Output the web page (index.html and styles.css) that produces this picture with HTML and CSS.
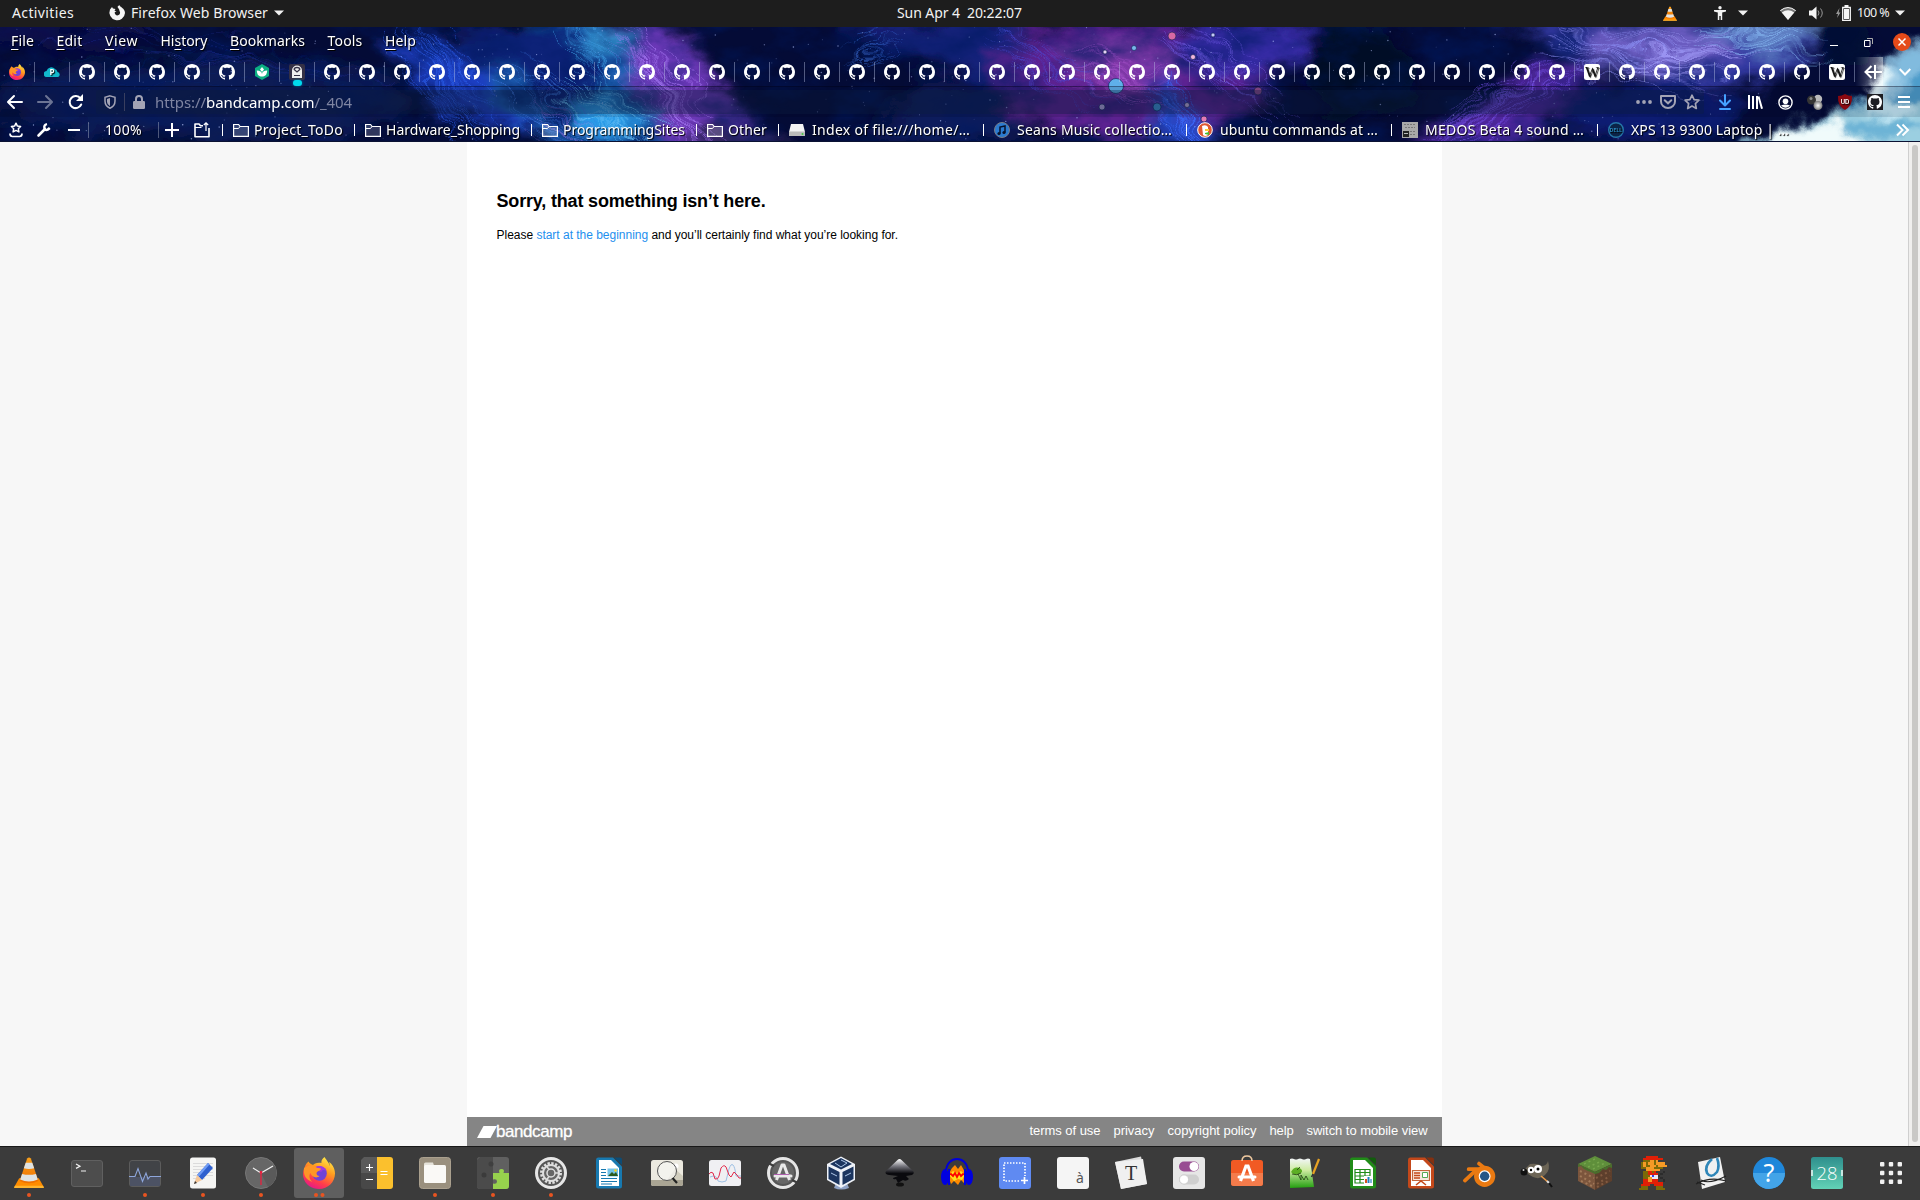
FILE: index.html
```html
<!DOCTYPE html>
<html lang="en">
<head>
<meta charset="utf-8">
<title>bandcamp</title>
<link rel="stylesheet" href="styles.css">
</head>
<body>
<svg class="defs" aria-hidden="true">
  <defs>
    <linearGradient id="ffBody" x1="0.8" y1="0" x2="0.3" y2="1"><stop offset="0" stop-color="#fff04a"/><stop offset=".4" stop-color="#ff9a1f"/><stop offset=".75" stop-color="#ff3c4b"/><stop offset="1" stop-color="#e5178c"/></linearGradient>
    <linearGradient id="orange" x1="0" y1="0" x2="0" y2="1"><stop offset="0" stop-color="#f9a01b"/><stop offset="1" stop-color="#ee6f00"/></linearGradient>
    <linearGradient id="teal" x1="0" y1="0" x2="0" y2="1"><stop offset="0" stop-color="#2f8f8d"/><stop offset="1" stop-color="#62d2b6"/></linearGradient>
    <linearGradient id="ink" x1="0" y1="0" x2="0" y2="1"><stop offset="0" stop-color="#fff"/><stop offset=".3" stop-color="#77777f"/><stop offset=".6" stop-color="#0a0a0e"/></linearGradient>
    <linearGradient id="npq" x1="0" y1="0" x2="0" y2="1"><stop offset="0" stop-color="#f3f6f8"/><stop offset=".4" stop-color="#cdeba0"/><stop offset="1" stop-color="#23a010"/></linearGradient>
    <radialGradient id="ball"><stop offset="0" stop-color="#fff"/><stop offset="1" stop-color="#777"/></radialGradient>
    <symbol id="github" viewBox="0 0 16 16"><path fill="currentColor" d="M8 0C3.58 0 0 3.58 0 8c0 3.54 2.29 6.53 5.47 7.59.4.07.55-.17.55-.38 0-.19-.01-.82-.01-1.49-2.01.37-2.53-.49-2.69-.94-.09-.23-.48-.94-.82-1.13-.28-.15-.68-.52-.01-.53.63-.01 1.08.58 1.23.82.72 1.21 1.87.87 2.33.66.07-.52.28-.87.51-1.07-1.78-.2-3.64-.89-3.64-3.95 0-.87.31-1.59.82-2.15-.08-.2-.36-1.02.08-2.12 0 0 .67-.21 2.2.82.64-.18 1.32-.27 2-.27s1.36.09 2 .27c1.53-1.04 2.2-.82 2.2-.82.44 1.1.16 1.92.08 2.12.51.56.82 1.27.82 2.15 0 3.07-1.87 3.75-3.65 3.95.29.25.54.73.54 1.48 0 1.07-.01 1.93-.01 2.2 0 .21.15.46.55.38A8.01 8.01 0 0 0 16 8c0-4.42-3.58-8-8-8z"/></symbol>
    <symbol id="firefox" viewBox="0 0 32 32"><path fill="url(#ffBody)" d="M21.500 0C19 2 18 4 18.500 6C14 5 11 7 10 8C8 7 6 6 5.500 4.500C2.500 7 2 9 1.500 11C0 14 -.2 18 .3 20C2 28 9 32 16 32C25 32 32 25 32 16.500C32 11 29 7 26 5C27 8 26.500 9 26.500 9C26 5 23 3 21.500 0z"/><circle cx="16.500" cy="16.500" r="7.300" fill="#7043d8"/><path fill="#a03be0" d="M10 12c4-5 12-3 13.500 2c-3-2-5-1-5 1z"/><path fill="#ff9626" d="M1 11c3-2 6-3 9-2c2 0 3 1 4 2c2 0 4 0 4 1c-1 2-4 2-4.500 4c0 2 1 3 3 3c-3 3-8 1-9-3c-2 2-1 7 2 9C3 23 0 18 1 11z"/></symbol>
    <symbol id="wiki" viewBox="0 0 16 16"><rect width="16" height="16" rx="2.500" fill="#fff"/><text x="8" y="13" text-anchor="middle" class="wiki-letter">W</text></symbol>
    <symbol id="paper" viewBox="0 0 16 16"><path fill="#12b8cc" d="M3 13a3 3 0 0 1-.5-6A5 5 0 0 1 11 5a4 4 0 0 1 2.500 3A2.600 2.600 0 0 1 14 13z"/><text x="8" y="11.200" text-anchor="middle" class="p-letter">P</text></symbol>
    <symbol id="plant" viewBox="0 0 16 16"><path fill="#0caf83" d="M8 0l7 4v8l-7 4l-7-4V4z"/><path fill="#fff" d="M8 3l2 2.500L8 8L6 5.500zM2.800 6.500C6 6.500 8 8 8 10C8 8 10 6.500 13.200 6.500C13 11 11 12.500 8 12.500S3 11 2.800 6.500z"/></symbol>
    <symbol id="proton" viewBox="0 0 16 16"><rect width="16" height="16" rx="2" fill="#343045"/><path fill="#eee" d="M3 14V6.500a5 5 0 0 1 10 0V14z"/><path fill="none" stroke="#343045" stroke-width="1.300" d="M5.200 5.500a2.800 2 0 0 1 5.600 0L8 8z"/><path stroke="#343045" fill="none" d="M5 11.500h6"/></symbol>
    <symbol id="cone" viewBox="0 0 32 34"><path fill="#ff8c00" d="M5.500 23h21l5.500 10H0z"/><path fill="#ffb52e" d="M1 31h30l1 2.500H0z"/><path fill="url(#orange)" d="M14 2q2-2 4 0l8 24q-10 5-20 0z"/><path fill="#dfe3e4" d="M12.500 6.500h7l2 6q-5.500 1.500-11 0zM8.600 18.500q7.400 2 14.800 0l2 6q-9.400 4-18.800 0z"/></symbol>
    <symbol id="folder" viewBox="0 0 16 16"><path fill="rgba(255,255,255,.18)" stroke="#fff" stroke-width="1.200" d="M.6 13V2.500h5l1.500 2h8.300V14.400H.6z"/><path fill="none" stroke="#fff" d="M1 6.500h4.500l1.500-2"/></symbol>
    <symbol id="caret" viewBox="0 0 10 6"><path fill="currentColor" d="M0 .5h10L5 5.500z"/></symbol>
  </defs>
</svg>

<header class="topbar">
  <span class="activities" data-w="62">Activities</span>
  <svg class="app-icon" viewBox="0 0 16 16"><path fill="#f5f5f5" d="M3 2l1 1.500L6.500 4L5.500 5.500L7.500 7H5.800A2.700 2.700 0 1 0 10.500 6C10.500 4 9 3 8.500 2C9 1 10 .5 10.500 0c0 2 5.500 3 5.500 8A7.800 7.800 0 1 1 1 4.500z"/></svg>
  <span class="app-name" data-w="137">Firefox Web Browser</span>
  <svg class="caret"><use href="#caret"/></svg>
  <span class="clock" data-w="125">Sun Apr 4&ensp;20:22:07</span>
  <div class="tray">
    <svg class="t-cone"><use href="#cone"/></svg>
    <svg class="t-a11y" viewBox="0 0 12 14"><circle cx="6" cy="1.700" r="1.700" fill="#f2f2f2"/><path fill="#f2f2f2" d="M0 4h12v1.500L8.200 6.500V14H6.700V10H5.300v4H3.800V6.500L0 5.500z"/></svg>
    <svg class="caret t-c1"><use href="#caret"/></svg>
    <svg class="t-wifi" viewBox="0 0 16 13"><path fill="#777" d="M0 3.500Q8-3 16 3.500L8 13z"/><path fill="#f5f5f5" d="M1.800 5.500Q8 1 14.200 5.500L8 13z"/><path fill="none" stroke="#f5f5f5" d="M.3 3.700Q8-2.600 15.700 3.700"/></svg>
    <svg class="t-vol" viewBox="0 0 15 14"><path fill="#f5f5f5" d="M0 4.500h3L7.500.5v13L3 9.500H0z"/><path fill="none" stroke="#999" d="M9 4.500q2 2.500 0 5M11.500 2.500q3.500 4.500 0 9"/></svg>
    <svg class="t-bat" viewBox="0 0 15 16"><path fill="#999" d="M3.500 3L0 9h2L1 13l3.500-5.500H2.700z"/><path fill="none" stroke="#f5f5f5" stroke-width="1.300" d="M6.700 2.500h7.600v12.800H6.700z"/><path fill="#f5f5f5" d="M8.500 0h4v2.500h-4zM8 4h5v10H8z"/></svg>
    <span class="t-pct" data-w="32">100 %</span>
    <svg class="caret t-c2"><use href="#caret"/></svg>
  </div>
</header>

<section class="chrome">
  <svg class="nebula" viewBox="0 27 1920 115" preserveAspectRatio="none">
    <defs>
      <filter id="cloud" x="-30%" y="-60%" width="160%" height="220%"><feGaussianBlur stdDeviation="8" result="b"/><feTurbulence type="fractalNoise" baseFrequency=".02 .035" numOctaves="5" seed="8"/><feDisplacementMap in="b" scale="44" xChannelSelector="R" yChannelSelector="G"/></filter>
      <filter id="puff" x="-20%" y="-40%" width="140%" height="180%"><feGaussianBlur stdDeviation="3" result="b"/><feTurbulence type="fractalNoise" baseFrequency=".035" numOctaves="4" seed="5"/><feDisplacementMap in="b" scale="28" xChannelSelector="R" yChannelSelector="G"/></filter>
      <filter id="wisp" x="-10%" y="-30%" width="120%" height="160%"><feTurbulence type="fractalNoise" baseFrequency=".025 .04" numOctaves="2" seed="3" result="n"/><feDisplacementMap in="SourceGraphic" in2="n" scale="34" xChannelSelector="R" yChannelSelector="G"/><feGaussianBlur stdDeviation=".5"/></filter>
      <filter id="dust" x="0" y="0" width="100%" height="100%"><feTurbulence type="fractalNoise" baseFrequency=".018 .03" numOctaves="6" seed="21"/><feColorMatrix values="0 0 0 0 0  0 0 0 0 .01  0 0 0 0 .12  2.600 0 0 0 -1.100"/></filter>
    </defs>
    <rect y="27" width="1920" height="115" fill="#040b36"/>
    <g filter="url(#cloud)">
      <ellipse cx="200" cy="100" rx="210" ry="40" fill="#0a1d55"/>
      <ellipse cx="60" cy="35" rx="90" ry="14" fill="#0b0a4c"/>
      <path d="M380 35L470 50L540 130L450 120z" fill="#1a3dc0"/>
      <path d="M530 20L640 15L630 60L700 150H560L480 80z" fill="#1b62b4"/>
      <path d="M450 27h110l60 70l-40 45z" fill="#0f2078"/>
      <path d="M600 15h70l60 82l50 60h-100z" fill="#6c38b8"/>
      <ellipse cx="612" cy="118" rx="34" ry="22" fill="#2a9ce8"/>
      <ellipse cx="610" cy="38" rx="28" ry="18" fill="#2f86c4"/>
      <path d="M820 17h190l60 40l-80 30z" fill="#14247c"/>
      <path d="M860 142h180l-30-50l-80-10z" fill="#0b1c5c"/>
      <ellipse cx="740" cy="142" rx="50" ry="14" fill="#30265e"/>
      <ellipse cx="1130" cy="78" rx="140" ry="62" fill="#5c2490"/>
      <ellipse cx="1120" cy="62" rx="60" ry="24" fill="#8038a8"/>
      <path d="M1150 70L1230 152H1160z" fill="#2746c4"/>
      <ellipse cx="1250" cy="46" rx="80" ry="26" fill="#342ca4"/>
      <ellipse cx="1360" cy="70" rx="55" ry="50" fill="#020b25"/>
      <path d="M1400 155L1570 50L1600 75L1500 155z" fill="#50289e"/>
      <path d="M1480 15h290l50 42l-120 40z" fill="#3238a0"/>
      <ellipse cx="1655" cy="46" rx="80" ry="26" fill="#6a5cc0"/>
      <ellipse cx="1770" cy="30" rx="60" ry="18" fill="#5f80c4"/>
      <ellipse cx="1650" cy="112" rx="90" ry="30" fill="#101e72"/>
      <ellipse cx="1840" cy="40" rx="32" ry="26" fill="#051036"/>
    </g>
    <rect y="27" width="1740" height="115" filter="url(#dust)" opacity=".6"/>
    <g class="strands" id="strands" fill="none" filter="url(#wisp)"></g>
    <g filter="url(#puff)">
      <path d="M1780 150L1800 128L1830 122L1850 105L1880 98L1895 60L1940 34V150z" fill="#4e9dcb"/>
      <path d="M1700 160L1740 140L1775 136L1800 118L1850 114L1880 96L1945 105V160z" fill="#9bcfe1"/>
      <path d="M1758 150L1800 122L1838 124L1870 150z" fill="#f0fbfb"/>
      <ellipse cx="1880" cy="128" rx="34" ry="9" fill="#6db4d6"/>
      <ellipse cx="1892" cy="108" rx="26" ry="8" fill="#c4e8f6"/>
      <ellipse cx="1884" cy="84" rx="14" ry="16" fill="#e4f6fb"/>
      <path d="M1880 60L1925 35V70L1890 100z" fill="#8fc3e2" opacity=".8"/>
    </g>
    <g id="stars"></g>
    <g stroke="#0c1c50" stroke-opacity=".6"><circle cx="1116" cy="86" r="7.500" fill="#5fb0ea"/><circle cx="1157" cy="107" r="4" fill="#3f93d2"/><circle cx="1172" cy="36" r="4" fill="#d968a4"/><circle cx="1102" cy="107" r="3" fill="#b8a8dc"/><circle cx="1187" cy="105" r="2.500" fill="#c8b0da"/><circle cx="1204" cy="119" r="3" fill="#e47bb4"/><circle cx="1258" cy="91" r="4" fill="#8d4a8c"/><circle cx="1193" cy="57" r="2.500" fill="#f0b8dc"/><circle cx="1105" cy="52" r="2" fill="#e8d4f4"/><circle cx="1134" cy="48" r="2.500" fill="#79b7ea"/><circle cx="1213" cy="35" r="2" fill="#c4c8f8"/></g>
  </svg>

  <nav class="menubar">
    <span data-w="23"><u>F</u>ile</span><span data-w="26"><u>E</u>dit</span><span data-w="33"><u>V</u>iew</span><span data-w="47">Hi<u>s</u>tory</span><span data-w="75"><u>B</u>ookmarks</span><span data-w="35"><u>T</u>ools</span><span data-w="31"><u>H</u>elp</span>
    <div class="winctl">
      <svg width="8" height="16" viewBox="0 0 8 16"><path stroke="#fff" d="M0 11.500h8"/></svg>
      <svg width="9" height="9" viewBox="0 0 9 9"><path fill="none" stroke="#fff" d="M.5 2.500h5.500v6H.5z"/><path fill="none" stroke="#aaa" d="M3 .5h5.500V6"/></svg>
      <svg width="18" height="18" viewBox="0 0 18 18"><circle cx="9" cy="9" r="9" fill="#e54a19"/><path stroke="#fff" stroke-width="1.500" d="M5.500 5.500l7 7M12.500 5.500l-7 7"/></svg>
    </div>
  </nav>

  <div class="tabs"><div class="tabstrip" id="tabstrip"></div>
    <div class="tabend"><svg width="18" height="16" viewBox="0 0 18 16"><path fill="none" stroke="#fff" stroke-width="2" d="M1 8h17M7.500 2L1.500 8l6 6M11 1v14"/></svg></div>
    <svg class="alltabs" width="12" height="8" viewBox="0 0 12 8"><path fill="none" stroke="#fff" stroke-width="2" d="M.7 1L6 6.500L11.300 1"/></svg>
  </div>

  <div class="navbar">
    <svg class="n-back" viewBox="0 0 16 14"><path fill="none" stroke="#fff" stroke-width="2" stroke-linecap="round" stroke-linejoin="round" d="M15 7H1.500M7 1L1 7l6 6"/></svg>
    <svg class="n-fwd" viewBox="0 0 16 14"><path fill="none" stroke="#fff" stroke-opacity=".4" stroke-width="2" stroke-linecap="round" stroke-linejoin="round" d="M1 7h13.500M9 1l6 6l-6 6"/></svg>
    <svg class="n-reload" viewBox="0 0 16 16"><path fill="none" stroke="#fff" stroke-width="2" stroke-linecap="round" d="M13.200 10.500A6 6 0 1 1 12.500 4.500"/><path fill="#fff" d="M15 0v7H8z"/></svg>
    <div class="urlbar">
      <svg class="n-shield" viewBox="0 0 12 14"><path fill="none" stroke="#a3a4b5" stroke-width="1.500" d="M6 .9l5 1.500V6q0 5-5 7.200Q1 11 1 6V2.400z"/><path fill="#a3a4b5" d="M6 3l-3 1v3q0 2.500 3 4.200z"/></svg>
      <i class="n-sep"></i>
      <svg class="n-lock" viewBox="0 0 12 14"><path fill="none" stroke="#a3a4b5" stroke-width="2" d="M3 7V4a3 3 0 0 1 6 0v3"/><rect y="6" width="12" height="8" rx="1.200" fill="#a3a4b5"/></svg>
      <span class="url" data-w="197">https://<b>bandcamp.com</b>/_404</span>
      <svg class="n-dots" viewBox="0 0 16 4"><g fill="#a3a4b5"><circle cx="2" cy="2" r="1.900"/><circle cx="8" cy="2" r="1.900"/><circle cx="14" cy="2" r="1.900"/></g></svg>
      <svg class="n-pocket" viewBox="0 0 16 14"><path fill="none" stroke="#a3a4b5" stroke-width="2" stroke-linejoin="round" d="M1 1h14v5.500a7 6.500 0 0 1-14 0z"/><path fill="none" stroke="#a3a4b5" stroke-width="2" stroke-linecap="round" d="M4.700 5.200L8 8.300l3.300-3.100"/></svg>
      <svg class="n-star" viewBox="0 0 16 16"><path fill="none" stroke="#a3a4b5" stroke-width="1.700" stroke-linejoin="round" d="M8 1.200l2.100 4.400l4.800.6l-3.500 3.400l.9 4.900L8 12.100l-4.300 2.400l.9-4.900L1.100 6.200l4.800-.6z"/></svg>
    </div>
    <svg class="n-down" viewBox="0 0 12 16"><path fill="none" stroke="#45a1ff" stroke-width="2" stroke-linecap="round" stroke-linejoin="round" d="M6 1v10M1 6.500l5 5l5-5M1 15h10"/></svg>
    <svg class="n-lib" viewBox="0 0 15 14"><path fill="none" stroke="#fff" stroke-width="2" d="M1 0v14M5 1v13M9 1v13M10.500 1.500L14 13.700"/></svg>
    <svg class="n-acct" viewBox="0 0 15 15"><circle cx="7.500" cy="7.500" r="6.600" fill="none" stroke="#fff" stroke-width="1.400"/><circle cx="7.500" cy="6.200" r="2.800" fill="#fff"/><path fill="#fff" d="M3 10.500q4.500-2 9 0q-4.500 4.500-9 0z"/></svg>
    <svg class="n-balls" viewBox="0 0 16 16"><circle cx="11" cy="5" r="4.200" fill="#bbb"/><circle cx="4.500" cy="6" r="4.500" fill="#343434"/><circle cx="4" cy="4.500" r="1.500" fill="#888"/><circle cx="11" cy="11.500" r="4.500" fill="url(#ball)"/></svg>
    <svg class="n-ubo" viewBox="0 0 14 16"><path fill="#8a0810" d="M7 0q3 2 7 2q.5 10-7 14Q-.5 12 0 2q4 0 7-2z"/><text x="7" y="9.500" text-anchor="middle" class="ubo-text">UD</text></svg>
    <div class="n-gh"><svg width="14" height="14"><use href="#github"/></svg></div>
    <svg class="n-menu" viewBox="0 0 12 12"><path stroke="#fff" stroke-width="2" d="M0 1h12M0 6h12M0 11h12"/></svg>
  </div>

  <div class="bookmarks">
    <svg class="b-tray" viewBox="0 0 14 16"><path fill="none" stroke="#fff" stroke-width="1.500" stroke-linejoin="round" d="M7 1.200l1.400 2.900l3.200.4L9.300 6.700l.6 3.200L7 8.400L4.100 9.900l.6-3.200L2.400 4.500l3.200-.4z"/><path fill="none" stroke="#fff" stroke-width="1.700" d="M1 11.500q0 3 2.500 3h7q2.500 0 2.500-3"/></svg>
    <svg class="b-wrench" viewBox="0 0 14 14"><path stroke="#fff" stroke-width="2.600" stroke-linecap="round" d="M1.500 12.500L8 6"/><path fill="none" stroke="#fff" stroke-width="2.400" d="M10 1.200Q6.500 2 7.500 5.500T12.800 5"/></svg>
    <svg class="b-minus" viewBox="0 0 12 2"><path stroke="#fff" stroke-width="2" d="M0 1h12"/></svg>
    <i class="b-sep s1"></i>
    <span class="b-zoom" data-w="37">100%</span>
    <i class="b-sep s2"></i>
    <svg class="b-plus" viewBox="0 0 14 14"><path stroke="#fff" stroke-width="2" d="M0 7h14M7 0v14"/></svg>
    <svg class="b-open" viewBox="0 0 16 16"><path fill="none" stroke="#fff" stroke-width="1.600" stroke-linejoin="round" d="M9 3.800H6.500L5 2H1v12.800h14V6"/><path fill="none" stroke="#fff" stroke-width="1.200" d="M12 9V1M9.800 3L12 .8L14.200 3M1 5.500h6.500"/></svg>
    <i class="bar"></i><svg class="bm"><use href="#folder"/></svg><span data-w="89">Project_ToDo</span>
    <i class="bar"></i><svg class="bm"><use href="#folder"/></svg><span data-w="134">Hardware_Shopping</span>
    <i class="bar"></i><svg class="bm"><use href="#folder"/></svg><span data-w="122">ProgrammingSites</span>
    <i class="bar"></i><svg class="bm"><use href="#folder"/></svg><span data-w="39">Other</span>
    <i class="bar"></i><svg class="bm wide" viewBox="0 0 16 16"><path fill="#f4f4f4" d="M2 2h12l2 8H0z"/><path fill="#bbb" d="M0 9.500h16V14H0z"/><circle cx="13.500" cy="12" r="1" fill="#4c4"/></svg><span data-w="158">Index of file:///home/…</span>
    <i class="bar mid"></i><svg class="bm wide" viewBox="0 0 16 16"><circle cx="8" cy="8" r="7.500" fill="#2b7ad0" stroke="#777c88"/><path fill="none" stroke="#06122c" stroke-width="1.500" d="M6 11.500V5l5-1v6.500"/><circle cx="5" cy="11.500" r="1.600" fill="#06122c"/><circle cx="10" cy="10.500" r="1.600" fill="#06122c"/></svg><span data-w="155">Seans Music collectio…</span>
    <i class="bar far"></i><svg class="bm wide" viewBox="0 0 16 16"><circle cx="8" cy="8" r="7.300" fill="#de5833" stroke="#fff"/><path fill="#fff" d="M5 4q4-2 6 1v8q-3 2-5 0z"/><path fill="#fc3" d="M8 7h4v2H8z"/><path fill="#4b3" d="M8 11l4-1v3l-4-1z"/></svg><span data-w="158">ubuntu commands at …</span>
    <i class="bar mid"></i><svg class="bm" viewBox="0 0 16 16"><path fill="#a9a9a9" d="M0 0h16v16H0z"/><path stroke="#777" stroke-dasharray="2 1" d="M2 2.500h12M3 5.500h10M8 9.500h6M8 12.500h6"/><path fill="#222" d="M1 9h6v6H1z"/><path stroke="#bbb" d="M2 11.500h4"/></svg><span class="after-note" data-w="159">MEDOS Beta 4 sound …</span>
    <i class="bar mid"></i><svg class="bm wide" viewBox="0 0 16 16"><circle cx="8" cy="8" r="7.300" fill="#0b2447" stroke="#2577a8" stroke-width="1.400"/><text x="8" y="10" text-anchor="middle" class="dell-text">DELL</text></svg><span data-w="158">XPS 13 9300 Laptop | …</span>
    <svg class="b-more" viewBox="0 0 13 12"><path fill="none" stroke="#fff" stroke-width="2" d="M1 .5L6.500 6L1 11.500M6.500 .5L12 6l-5.500 5.500"/></svg>
  </div>
</section>

<main class="viewport">
  <article class="page">
    <section class="message">
      <h1><span data-w="269">Sorry, that something isn’t here.</span></h1>
      <p><span data-w="401.500">Please <a>start at the beginning</a> and you’ll certainly find what you’re looking for.</span></p>
    </section>
    <footer class="foot">
      <svg class="bc-mark" viewBox="0 0 20 12"><path fill="#fff" d="M6.500 0H20L13.500 12H0z"/></svg>
      <span class="bc-name" data-w="76">bandcamp</span>
      <div class="foot-links"><span data-w="71">terms of use</span><span data-w="41">privacy</span><span data-w="89">copyright policy</span><span data-w="24">help</span><span data-w="121">switch to mobile view</span></div>
    </footer>
  </article>
  <div class="scrollbar"><i></i></div>
</main>

<footer class="dock">
  <div class="app run"><svg viewBox="0 0 32 32"><use href="#cone" x="1" y="-1" width="30" height="33"/></svg></div>
  <div class="app"><svg viewBox="0 0 32 32"><rect x=".5" y="3.500" width="31" height="26" rx="2.500" fill="#4d4d4d" stroke="#606060"/><path fill="none" stroke="#f2f2f2" stroke-width="1.200" d="M5 7l4 2.200l-4 2.200M10 14h5"/></svg></div>
  <div class="app run"><svg viewBox="0 0 32 32"><rect x=".5" y="3.500" width="31" height="26" rx="2.500" fill="#414347" stroke="#5c5c5c"/><path fill="#4c5264" d="M1 20h30v9H1z"/><path fill="none" stroke="#8ea6dc" stroke-width="1.100" d="M0 19.500h6l3-8l4.500 13L17 16l2 6l2-2.500h11"/></svg></div>
  <div class="app run"><svg viewBox="0 0 32 32"><rect x="3" y=".5" width="26" height="31" rx="2.500" fill="#f5f5f3"/><path stroke="#d4d4d4" stroke-width=".8" d="M6 6.500h20M6 9.500h20M6 12.500h20M6 15.500h20M6 18.500h20M6 21.500h12"/><path fill="#2e60cf" d="M10 18L21 6l5 5l-11 12z"/><path fill="#6f9cf5" d="M10 18L21 6l1.500 1.500L12 19.500z"/><path fill="#f4c79a" d="M10 18l5 5l-8 4z"/><path fill="#333" d="M8 24l2 2l-3 1z"/></svg></div>
  <div class="app run"><svg viewBox="0 0 32 32"><circle cx="16" cy="16" r="15.500" fill="#666" stroke="#777"/><path fill="#5a5a5a" d="M16 16l14-7a16 16 0 0 1-7 21z"/><path fill="none" stroke="#f2f2f2" stroke-width="1.200" d="M8 11l8 5l12-7"/><path stroke="#e8203e" stroke-width="1.300" d="M16 14v14"/><circle cx="16" cy="15.500" r="1.400" fill="#e8203e"/></svg></div>
  <div class="app run two active"><svg viewBox="0 0 32 32"><use href="#firefox" width="32" height="32"/></svg></div>
  <div class="app"><svg viewBox="0 0 32 32"><path fill="#5a5a5a" d="M3 0h13v16H0V3z"/><path fill="#484848" d="M0 16h16v16H3q-3 0-3-3z"/><path fill="#fbc02d" d="M16 0h13q3 0 3 3v26q0 3-3 3H16z"/><path stroke="#fff" stroke-width="1.100" d="M5 10.500h7M8.500 7v7M5 22.500h7M19.500 14.500h7M19.500 17.500h7"/></svg></div>
  <div class="app run"><svg viewBox="0 0 32 32"><rect x=".5" y=".5" width="31" height="31" rx="3" fill="#9a907e" stroke="#aaa08e"/><path fill="#e6e3da" d="M5 7q0-1.500 1.500-1.500H14l1 3h10V12H5z"/><rect x="5" y="8" width="22" height="18" rx="1.500" fill="#faf9f6"/></svg></div>
  <div class="app run"><svg viewBox="0 0 32 32"><rect width="32" height="32" rx="3" fill="#606060"/><path fill="#4b4b4b" d="M3 0h13v32H3q-3 0-3-3V3z"/><path fill="#97d24d" d="M16 16h6.500q-1.500-4 2-4t2 4H32v13q0 3-3 3H16v-5.500q4 1 4-2t-4-2z"/><circle cx="7" cy="18" r="2.500" fill="#3b3b3b"/><circle cx="14" cy="7" r="2.500" fill="#3f3f3f"/></svg></div>
  <div class="app run"><svg viewBox="0 0 32 32"><circle cx="16" cy="16" r="14.500" fill="#555" stroke="#e6e6e6" stroke-width="3"/><circle cx="16" cy="16" r="9.500" fill="none" stroke="#dedede" stroke-width="3" stroke-dasharray="2.300 1.430"/><circle cx="16" cy="16" r="8" fill="#666" stroke="#dedede" stroke-width="2"/><circle cx="16" cy="16" r="4" fill="none" stroke="#dedede" stroke-width="1.500"/><path stroke="#dedede" stroke-width="1.500" d="M20 16h4M14 12.500L11.500 9M14 19.500L11.500 23"/></svg></div>
  <div class="app"><svg viewBox="0 0 32 32"><path fill="#1779b0" d="M5 .5h15l9 9V29q0 2.500-2.500 2.500h-21Q3 31.500 3 29V3Q3 .5 5 .5z"/><path fill="#0d4c75" d="M21 .5h6q2 0 2 2V8z"/><path fill="#fff" d="M6 3h12l8 8v18H6z"/><path stroke="#1779b0" stroke-width="1.200" d="M8 12.500h5M8 15.500h5M8 18.500h5M8 21.500h16M8 24.500h16M8 27h11"/><path fill="#74c3e8" d="M14.500 11.500H25v8H14.500z"/><path fill="#2b5a1d" d="M15 19l4-4l2 2l2-2l2 4z"/><circle cx="22.500" cy="13.500" r="1.300" fill="#f8d21c"/></svg></div>
  <div class="app"><svg viewBox="0 0 32 32"><rect y="3" width="32" height="26" rx="2.500" fill="#eceae0"/><path fill="#aaa594" d="M0 23h32v4q0 2-2 2H2q-2 0-2-2z"/><path fill="#d1cebe" d="M16 23l8-11l8 7v4z"/><circle cx="25" cy="9" r="2.500" fill="#fff"/><circle cx="16" cy="14" r="9.500" fill="#f6f6f2" fill-opacity=".75" stroke="#555"/><path stroke="#222" stroke-width="2.200" d="M21.500 21l4.500 5"/></svg></div>
  <div class="app"><svg viewBox="0 0 32 32"><rect y="3" width="32" height="26" rx="2.500" fill="#f0f0f3"/><path fill="none" stroke="#9ec0e4" d="M1 20q4-2 6 0t2 4q4 2 8 0l3-12q2-6 4-4t3 11h5"/><path fill="none" stroke="#e22a4b" d="M0 17q2-3 4-1l2 6q3 1 4-3l2-8q3-4 5-1l3 8l2 2l3-5l3 3l2 3h2"/></svg></div>
  <div class="app"><svg viewBox="0 0 32 32"><circle cx="16" cy="16" r="14.500" fill="#555" stroke="#e6e6e6" stroke-width="3"/><path stroke="#3b3b3b" stroke-width="2" d="M1 6l6 3M31 26l-6-3"/><circle cx="16" cy="16" r="11" fill="#666"/><path fill="none" stroke="#e9e9e9" stroke-width="3" stroke-linejoin="round" d="M9.500 23L15 8h2l5.500 15"/><path stroke="#e9e9e9" stroke-width="3" stroke-linecap="round" d="M8 19h16"/><path stroke="#b060b0" d="M7 17.500h15"/></svg></div>
  <div class="app"><svg viewBox="0 0 32 32"><path fill="#8fa3c6" d="M11 26h11l2 5q-8 3-15 0z"/><path fill="#eef2f8" d="M16-.5L30 7v16L16 31L2 23V7z"/><path fill="#1b355f" d="M16 1l11 6l-11 5.500L5 7zM3.500 9.500l11 5.500v13l-11-6zM28.500 9.500l-11 5.500v13l11-6z"/><path fill="none" stroke="#aec7e8" d="M6 16l6 3M20 19l6-3M10 6l6 4l6-4l-6-3"/></svg></div>
  <div class="app"><svg viewBox="0 0 32 32"><path fill="url(#ink)" d="M14.500 3q2-2 4 0L30 14q2 2-1 4l-6 1l3 3q-3 3-6 1l-5 3l-2-4q-3 1-3-1l5-2l-9-1q-5-1-3-4z"/><ellipse cx="17" cy="27.500" rx="4" ry="2" fill="#111"/></svg></div>
  <div class="app"><svg viewBox="0 0 32 32"><path fill="#ff8a00" d="M7 18l4-7l3-3l3 4l3-4l4 7l2 4l-3 7l-3-3l-3 5l-4-4l-3 3z"/><path fill="#ffdf1c" d="M8 18l4-4l4 2l4-2l4 4l-3 5l-4-1l-4 2z"/><path stroke="#f00" stroke-width="1.800" fill="none" d="M7 18l3-1l2 2l2-3l2 4l2-4l2 3l2-2l3 1"/><path fill="none" stroke="#0000d8" stroke-width="2" d="M5 14C6-2 26-2 27 14"/><ellipse cx="4" cy="20" rx="4" ry="8" fill="#0000e0"/><ellipse cx="28" cy="20" rx="4" ry="8" fill="#0000e0"/><path stroke="#0000e0" stroke-width="2" d="M8 12v16M24 12v16"/></svg></div>
  <div class="app"><svg viewBox="0 0 32 32"><rect width="32" height="32" rx="3" fill="#5f8af2"/><path fill="none" stroke="#fff" stroke-width="1.700" stroke-dasharray="1.500 1.500" d="M5 6h21v18H5z"/><path stroke="#5f8af2" stroke-width="5" d="M21 24h8M25.500 19v9"/><path stroke="#fff" stroke-width="1.700" d="M22 23.500h7M25.500 20v7"/></svg></div>
  <div class="app"><svg viewBox="0 0 32 32"><rect width="32" height="32" rx="3" fill="#f5f5f5"/><text x="23" y="26" text-anchor="middle" class="char-text">à</text></svg></div>
  <div class="app"><svg viewBox="0 0 32 32"><path fill="#dadada" d="M0 5L26-.5L32 27L6 32z"/><path fill="#f0f0f0" d="M0 5L28 2L32 27L6 32z"/><text x="16" y="23" text-anchor="middle" class="font-text">T</text></svg></div>
  <div class="app"><svg viewBox="0 0 32 32"><rect width="32" height="32" rx="3" fill="#e6e6e6"/><rect x="6" y="4.500" width="20" height="10" rx="5" fill="#984d92"/><circle cx="21" cy="9.500" r="4.500" fill="#fff"/><rect x="6" y="17.500" width="20" height="10" rx="5" fill="#cfcfcf"/><circle cx="11" cy="22.500" r="4.500" fill="#fff" stroke="#bbb" stroke-width=".5"/></svg></div>
  <div class="app"><svg viewBox="0 0 32 32"><rect y="3" width="32" height="26" rx="2.500" fill="#f15a24"/><path fill="#f47b4b" d="M0 16h32v10q0 3-3 3H3q-3 0-3-3z"/><path fill="none" stroke="#efc9a0" stroke-width="1.500" d="M11 4q0-5 5-5t5 5"/><path fill="none" stroke="#fff" stroke-width="3.200" d="M9.500 24L15 9h2l5.500 15"/><path stroke="#fff" stroke-width="3" stroke-linecap="round" d="M8 20h16"/></svg></div>
  <div class="app"><svg viewBox="0 0 32 32"><path fill="url(#npq)" d="M1 2q2-1 4 0t4 0t4 0t4 0t4 0l4 28l-24 1z"/><path fill="#5cae24" d="M2 15q4-7 10-3q3 3-2 5t-8-2z"/><path fill="none" stroke="#203a10" stroke-width=".8" d="M3 17q5 2 9-1M8 13l3-3M9 17l3 6v-5l3 5l2-4l2 4"/><path stroke="#e8a323" stroke-width="2.200" d="M30 2L24 17"/><path stroke="#333" stroke-width="1.500" d="M24 17l-1.500 3"/></svg></div>
  <div class="app"><svg viewBox="0 0 32 32"><path fill="#218c18" d="M5 .5h15l9 9V29q0 2.500-2.500 2.500h-21Q3 31.500 3 29V3Q3 .5 5 .5z"/><path fill="#115c0c" d="M21 .5h6q2 0 2 2V8z"/><path fill="#fff" d="M6 3h12l8 8v18H6z"/><path fill="none" stroke="#218c18" stroke-width="1.200" d="M8 12.500h15V26H8zM8 15.500h15M8 19h15M8 22.500h15M13 12.500V26M18 12.500V26"/><path fill="#fff" d="M17 19h9v8h-9z"/><path fill="#d9531e" d="M18 22h2v4h-2z"/><path fill="#1e7ec2" d="M20.500 20h2v6h-2z"/><path fill="#7fb5dc" d="M23 22h2v4h-2z"/></svg></div>
  <div class="app"><svg viewBox="0 0 32 32"><path fill="#c4481a" d="M5 .5h15l9 9V29q0 2.500-2.500 2.500h-21Q3 31.500 3 29V3Q3 .5 5 .5z"/><path fill="#843010" d="M21 .5h6q2 0 2 2V8z"/><path fill="#fff" d="M6 3h12l8 8v18H6z"/><path fill="#f9e7de" stroke="#c4683e" stroke-width="1.200" d="M7.500 13.500h17v10h-17z"/><path fill="none" stroke="#c4481a" stroke-width="1.600" d="M9 16h6M9 18.500h6M9 21h6M11 28l5-4l5 4"/><path fill="#fff" stroke="#5a5" d="M17.500 15.500h5v5h-5z"/></svg></div>
  <div class="app"><svg viewBox="0 0 34 32"><path fill="none" stroke="#ea7a12" stroke-width="4" stroke-linecap="round" stroke-linejoin="round" d="M2 24L15 12H6M15 12h6M17 6l11 9"/><circle cx="23" cy="19.500" r="8.800" fill="#fff" stroke="#ea7a12" stroke-width="5"/><circle cx="23" cy="19.500" r="5" fill="#265787"/></svg></div>
  <div class="app"><svg viewBox="0 0 32 32"><path fill="#6c6556" d="M4 12l5-5q8-1 11 2q6 0 7-5q3 9-3 14q-5 5-12 2l-5-3z"/><circle cx="3" cy="15" r="3.500" fill="#111"/><circle cx="2.500" cy="13" r="1" fill="#ccc"/><circle cx="10" cy="13" r="3.200" fill="#fff"/><circle cx="17" cy="12" r="4" fill="#fff"/><circle cx="10" cy="13" r="1.200"/><circle cx="17" cy="12" r="1.500"/><path stroke="#e89b4a" stroke-width="1.600" d="M20 19l7 6"/><path stroke="#ddd" stroke-width="2" d="M26 24l2 2"/><path stroke="#111" stroke-width="2" d="M28 26l3 4"/></svg></div>
  <div class="app"><svg class="mc" viewBox="0 0 34 34"><path fill="#5f8f3b" d="M17 0l17 8l-17 8L0 8z"/><path fill="#7c563d" d="M0 8l17 8v18L0 25z"/><path fill="#5d3f2c" d="M34 8l-17 8v18l17-9z"/><path fill="#496f2c" d="M0 8l17 8l17-8v4l-3-1l-3 3l-3-1l-4 4l-4 1l-4-2l-3-1l-4-2l-3-3l-3 1z"/><path stroke="#a27a5a" stroke-width="2" stroke-dasharray="2 3" d="M2 15l14 7M2 20l14 8M3 25l13 6"/><path stroke="#835b41" stroke-width="2" stroke-dasharray="2 3" d="M18 22l14-7M19 28l13-8M19 31l13-7"/><path stroke="#77a64d" stroke-width="1.500" stroke-dasharray="2 3" d="M6 8l11-5M10 11l14-6M15 13l12-6"/></svg></div>
  <div class="app"><svg class="mario" id="mario" viewBox="0 0 13 16" shape-rendering="crispEdges"></svg></div>
  <div class="app"><svg viewBox="0 0 32 32"><path fill="#f1f1f1" d="M3 5L25 0l5 25L7 32z"/><path fill="none" stroke="#2f86b8" stroke-width="2.600" d="M17 2Q9 9 12 16q4 6 10-1q3-6 0-14"/><path fill="none" stroke="#222" stroke-width="1.100" d="M1 27q14-8 30-3M6 23q8 5 25-4M2 25l8 3"/></svg></div>
  <div class="app"><svg viewBox="0 0 32 32"><circle cx="16" cy="16" r="16" fill="#1f87da"/><path fill="#43a4e8" d="M0 16h32a16 16 0 0 1-32 0z"/><text x="16" y="25" text-anchor="middle" class="help-text">?</text></svg></div>
  <div class="app"><svg viewBox="0 0 32 32"><rect width="32" height="32" rx="2.500" fill="url(#teal)"/><path stroke="#e8f4f2" stroke-width="1.600" d="M1 13v6M31 13v6"/><text x="16" y="23" text-anchor="middle" class="cal-text" textLength="21" lengthAdjust="spacingAndGlyphs">28</text></svg></div>
  <svg class="grid" viewBox="0 0 22 22"><g fill="#f2f2f2"><rect width="4.400" height="4.400" rx="1"/><rect x="8.800" width="4.400" height="4.400" rx="1"/><rect x="17.600" width="4.400" height="4.400" rx="1"/><rect y="8.800" width="4.400" height="4.400" rx="1"/><rect x="8.800" y="8.800" width="4.400" height="4.400" rx="1"/><rect x="17.600" y="8.800" width="4.400" height="4.400" rx="1"/><rect y="17.600" width="4.400" height="4.400" rx="1"/><rect x="8.800" y="17.600" width="4.400" height="4.400" rx="1"/><rect x="17.600" y="17.600" width="4.400" height="4.400" rx="1"/></g></svg>
</footer>
<script src="script.js"></script>
</body>
</html>
```
FILE: styles.css
```css
* { box-sizing: border-box; }
body { margin: 0; width: 1920px; height: 1200px; overflow: hidden; display: flex; flex-direction: column; background: #f7f7f7; font-family: "Noto Sans", "Open Sans", sans-serif; font-size: 14px; }
svg { display: block; flex: none; overflow: visible; }
i { display: block; flex: none; }
.defs { position: absolute; width: 0; height: 0; }
[data-w] { display: inline-block; white-space: nowrap; flex: none; }

.topbar { height: 27px; flex: none; background: #1d1d1d; color: #f2f2f2; display: flex; align-items: center; padding: 0 0 1px 12px; line-height: 26px; }
.app-icon { width: 16px; height: 16px; margin-left: 35px; }
.app-name { margin-left: 6px; }
.caret { width: 10px; height: 6px; margin-left: 6px; }
.clock { margin-left: 613px; }
.tray { flex: 1; display: flex; align-items: center; padding-left: 641px; }
.t-cone { width: 14px; height: 15px; }
.t-a11y { width: 12px; height: 14px; margin-left: 37px; }
.t-c1 { margin-left: 12px; }
.t-wifi { width: 16px; height: 13px; margin-left: 32px; }
.t-vol { width: 15px; height: 14px; margin-left: 13px; }
.t-bat { width: 15px; height: 16px; margin-left: 12px; }
.t-pct { margin-left: 6px; font-size: 12.500px; }
.t-c2 { margin-left: 6px; }

.chrome { height: 115px; flex: none; position: relative; display: flex; flex-direction: column; color: #fff; overflow: hidden; border-bottom: 1px solid #0b1233; }
.nebula { position: absolute; left: 0; top: 0; width: 1920px; height: 115px; overflow: hidden; }
.strands { stroke-width: .9; }
.menubar, .tabs, .navbar, .bookmarks { position: relative; display: flex; align-items: center; flex: none; text-shadow: 1px 1px 1px #000; }
.menubar { height: 29px; padding: 0 9px 2px 11px; gap: 22.500px; }
.menubar u { text-underline-offset: 3px; text-decoration-thickness: 1px; }
.winctl { margin-left: auto; display: flex; align-items: center; padding-top: 3px; }
.winctl svg + svg { margin-left: 26px; }
.winctl svg + svg + svg { margin-left: 20px; }
.tabs { height: 31px; border-bottom: 1px solid rgba(0, 0, 20, .45); padding-top: 1px; }
.tabstrip { display: flex; align-items: center; }
.tab { width: 35px; height: 20px; border-right: 1px solid rgba(190, 200, 230, .42); display: flex; align-items: center; justify-content: center; position: relative; }
.tab svg { width: 16px; height: 16px; }
.tab.sound::after { content: ""; position: absolute; left: 13px; top: 18px; width: 9px; height: 6px; border-radius: 3px; background: #00d9ee; box-shadow: 0 0 3px #087ca5; }
.tabend { width: 28px; height: 29px; display: flex; align-items: center; justify-content: flex-end; padding-right: 1px; background: linear-gradient(90deg, transparent, rgba(255, 255, 255, .45)); }
.alltabs { margin-left: 16px; }
.wiki-letter { font: 15px "Liberation Serif", serif; fill: #111; }
.p-letter { font: bold 8px "Open Sans", sans-serif; fill: #fff; }

.navbar { height: 30px; padding-left: 7px; background: rgba(0, 0, 20, .12); }
.n-back { width: 16px; height: 14px; }
.n-fwd { width: 16px; height: 14px; margin-left: 14px; }
.n-reload { width: 16px; height: 16px; margin-left: 15px; }
.urlbar { width: 1608px; height: 24px; margin-left: 12px; padding-left: 8px; border-radius: 2px; background: rgba(12, 28, 62, .35); display: flex; align-items: center; }
.n-shield { width: 12px; height: 14px; }
.n-sep { width: 1px; height: 18px; margin-left: 8px; background: rgba(130, 120, 130, .4); }
.n-lock { width: 12px; height: 14px; margin-left: 8px; }
.url { margin-left: 10px; color: #7f85a2; font-size: 15px; line-height: 24px; text-shadow: none; }
.url b { font-weight: 400; color: #fff; }
.n-dots { width: 16px; height: 4px; margin-left: auto; }
.n-pocket { width: 16px; height: 14px; margin-left: 8px; }
.n-star { width: 16px; height: 16px; margin: 0 4px 0 8px; }
.n-down { width: 12px; height: 16px; margin-left: 15px; }
.n-lib { width: 15px; height: 14px; margin-left: 17px; }
.n-acct { width: 15px; height: 15px; margin-left: 15px; }
.n-balls { width: 16px; height: 16px; margin-left: 14px; }
.n-ubo { width: 14px; height: 16px; margin-left: 15px; }
.ubo-text { font: bold 6px Inter, sans-serif; fill: #fff; }
.n-gh { width: 16px; height: 16px; margin-left: 15px; background: #1d1d22; display: grid; place-items: center; }
.n-menu { width: 12px; height: 12px; margin-left: 15px; }

.bookmarks { height: 25px; padding-left: 9px; line-height: 24px; }
.b-tray { width: 14px; height: 16px; }
.b-wrench { width: 14px; height: 14px; margin-left: 14px; }
.b-minus { width: 12px; height: 2px; margin-left: 17px; }
.b-sep { width: 1px; height: 16px; background: rgba(255, 255, 255, .3); }
.s1 { margin-left: 8px; }
.s2 { margin-left: 16px; }
.b-zoom { margin-left: 16px; }
.b-plus { width: 14px; height: 14px; margin-left: 6px; }
.b-open { width: 16px; height: 16px; margin: 0 1px 0 15px; }
.bar { width: 1px; height: 12px; margin-left: 11px; background: #fff; }
.bar.far { margin-left: 14px; }
.bar.mid { margin-left: 13px; }
.bm { width: 16px; height: 16px; margin: 0 5px 0 10px; }
.bm.wide { margin-right: 7px; }
.after-note { margin-left: 2px; }
.dell-text { font: bold 5px Inter, sans-serif; fill: #2b8cc4; }
.b-more { width: 13px; height: 12px; margin-left: 107px; }

.viewport { height: 1004px; flex: none; display: flex; padding-left: 467px; }
.page { width: 975px; background: #fff; display: flex; flex-direction: column; font-family: "Liberation Sans", Arial, sans-serif; color: #000; }
.message { flex: 1; padding: 47px 29px 0 29.500px; }
h1 { margin: 0; font-size: 18px; line-height: 24px; }
p { margin: 14px 0 0; font-size: 12px; line-height: 16px; }
a { color: #1d8fee; }
.foot { height: 29px; background: #858585; color: #fff; display: flex; align-items: center; padding-left: 10px; padding-right: 14.500px; }
.bc-mark { width: 20px; height: 12px; }
.bc-name { margin-left: -1px; font-size: 17px; line-height: 26px; -webkit-text-stroke: .3px #fff; }
.foot-links { margin-left: auto; display: flex; gap: 13px; font-size: 13px; line-height: 27px; padding-bottom: 2px; }
.scrollbar { width: 12px; margin-left: auto; border-left: 1px solid #cfcfcf; background: #f0efee; padding: 3px 2px 4px 3px; display: flex; }
.scrollbar i { width: 6px; border-radius: 3px; background: #c9c8c6; }

.dock { height: 54px; flex: none; background: #3b3b3b; border-top: 1px solid #191919; display: flex; align-items: center; }
.app { width: 58px; height: 53px; flex: none; display: flex; align-items: center; justify-content: center; position: relative; padding-bottom: 1px; }
.app > svg { width: 32px; height: 32px; position: relative; }
.app > svg.mc { width: 34px; height: 34px; }
.app > svg.mario { width: 28px; height: 34px; }
.app.active::before { content: ""; position: absolute; inset: 1px 4px 2px; border-radius: 3px; background: #5f5f5f; }
.app.run::after { content: ""; position: absolute; left: 27px; top: 46px; width: 4px; height: 4px; border-radius: 50%; background: #e95420; }
.app.two::after { left: 24px; box-shadow: 6.500px 0 #e95420; }
.grid { width: 22px; height: 22px; margin: 0 0 1px 24px; }
.char-text { font: 14px "Noto Sans", sans-serif; fill: #555; }
.font-text { font: 20px "Liberation Serif", serif; fill: #333; }
.help-text { font: 25px "Noto Sans", sans-serif; fill: #fff; }
.cal-text { font: 300 19px "Open Sans", sans-serif; fill: #fff; }
```
FILE: script.js
```js
// Open tabs: mostly GitHub, with a few other sites between them.
const special = { 0: 'firefox', 1: 'paper', 7: 'plant', 8: 'proton', 45: 'wiki', 52: 'wiki' };
let tabs = '';
for (let i = 0; i < 53; i++) {
  tabs += `<div class="tab${i === 8 ? ' sound' : ''}"><svg><use href="#${special[i] || 'github'}"/></svg></div>`;
}
document.getElementById('tabstrip').innerHTML = tabs;

let seed = 7;
const rnd = () => (seed = (seed * 16807) % 2147483647) / 2147483647;

// Nebula filaments: [x1, y1, x2, y2, spread, colour, count, opacity]
const bands = [
  [400, 20, 500, 150, 34, '#2f62f0', 46, .42],
  [560, 15, 625, 80, 26, '#3f9fe6', 30, .4],
  [500, 70, 620, 160, 34, '#3f7ae0', 34, .35],
  [560, 85, 660, 150, 26, '#6cc4f8', 30, .45],
  [618, 20, 720, 165, 26, '#a274f0', 52, .42],
  [530, 100, 600, 165, 30, '#a070e0', 16, .35],
  [985, 20, 1120, 110, 24, '#4b52e0', 26, .3],
  [1070, 60, 1180, 90, 30, '#b45cd8', 34, .3],
  [1165, 20, 1290, 115, 26, '#7a62ee', 34, .35],
  [1160, 80, 1210, 165, 18, '#3d6cff', 32, .5],
  [1420, 155, 1590, 50, 26, '#7a54f0', 44, .4],
  [1540, 30, 1720, 80, 30, '#8a8cf0', 46, .38],
  [1610, 60, 1770, 50, 26, '#a9a4ff', 36, .4],
  [1690, 25, 1830, 38, 22, '#8cc0f8', 30, .4],
  [845, 60, 900, 25, 24, '#3a6fd8', 18, .35],
  [40, 30, 380, 60, 60, '#1c2c90', 26, .3]
];
let strands = '';
for (const [x1, y1, x2, y2, s, colour, n, o] of bands) {
  const dx = x2 - x1, dy = y2 - y1, len = Math.hypot(dx, dy);
  for (let k = 0; k < n; k++) {
    const off = (rnd() + rnd() - 1) * s, a = rnd() * .5, b = a + .2 + rnd() * .45;
    const bend = off + (rnd() - .5) * 14;
    const at = (t, d) => `${(x1 + dx * t - dy / len * d).toFixed(1)} ${(y1 + dy * t + dx / len * d).toFixed(1)}`;
    strands += `<path d="M${at(a, off)}Q${at((a + b) / 2, bend)} ${at(b, off + (rnd() - .5) * 10)}" stroke="${colour}" opacity="${(o * (.5 + rnd())).toFixed(2)}"/>`;
  }
}
document.getElementById('strands').innerHTML = strands;

// Scatter of faint stars over the theme background.
let stars = '';
for (let i = 0; i < 420; i++) {
  stars += `<circle cx="${(rnd() * 1780).toFixed(1)}" cy="${(27 + rnd() * 112).toFixed(1)}" r="${(0.3 + rnd() * 0.5).toFixed(2)}" fill="#b9c8ff" opacity="${(0.2 + rnd() * 0.5).toFixed(2)}"/>`;
}
document.getElementById('stars').innerHTML = stars;

// Pixel sprite.
const colours = { R: '#e01f06', B: '#7c6a08', S: '#f59a26', W: '#e8e8f4', U: '#3a3ae0', K: '#2c2c2c' };
const sprite = [
  '...RRRRRR....', '..RRRRRRRRR..', '..BBBSSBS....', '.BSBSSSBSSSS.',
  '.BSBBSSSBSSSS', '.BBSSSSBBBB..', '...SSSSSSS...', '..BBRRBR...K.',
  '..BBRRRRR.K..', '..BBBWUWWK...', '..BBSSWWW.K..', '..RRSSRRR..K.',
  '..RRRRRRRRR..', '.RRRR..RRRR..', '.BBB....BBB..', 'BBBB....BBBB.'
];
let px = '';
sprite.forEach((row, y) => [...row].forEach((c, x) => {
  if (colours[c]) px += `<rect x="${x}" y="${y}" width="1.020" height="1.020" fill="${colours[c]}"/>`;
}));
document.getElementById('mario').innerHTML = px;

document.querySelectorAll('[data-w]').forEach(el => {
  const want = +el.dataset.w;
  const n = el.textContent.length;
  el.style.letterSpacing = ((want - el.getBoundingClientRect().width) / n).toFixed(3) + 'px';
  el.style.width = want + 'px';
});
```
